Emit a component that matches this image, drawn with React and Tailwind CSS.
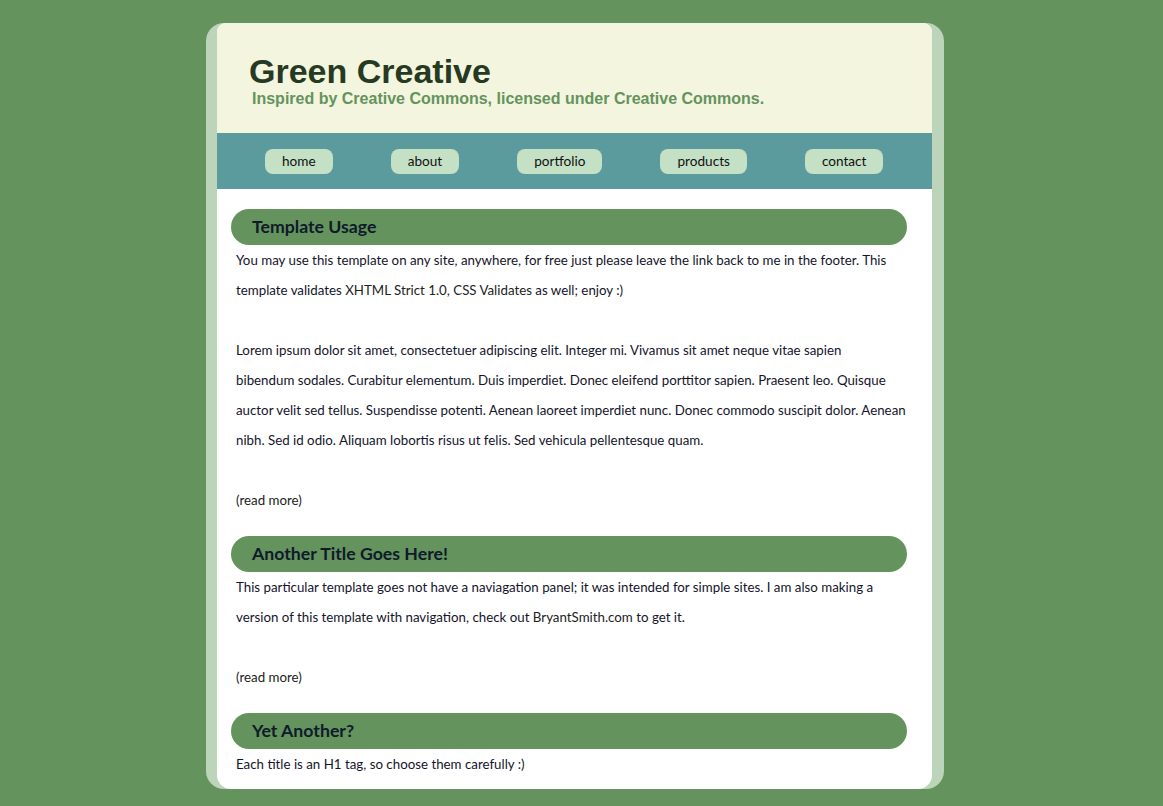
import React from 'react';

const navItems = ['home', 'about', 'portfolio', 'products', 'contact'];

const PostTitle = ({ children }) => (
  <h1 className="h-[36px] w-[676px] rounded-full bg-[#64935d] pl-[21px] text-[17.7px] font-bold leading-[36px] text-[#0f1a2b]">
    {children}
  </h1>
);

const App = () => {
  return (
    <div className="min-h-[806px] bg-[#64935d] pt-[23px] pr-[13px] font-['Lato',sans-serif]">
      {/* outer frame with the light side strips */}
      <div className="mx-auto w-[738px] rounded-[18px] bg-[#bcd4b9] pl-[11px] pr-[12px]">
        <div className="overflow-hidden rounded-t-[9px] rounded-b-[14px] bg-white">
          {/* header */}
          <div className="h-[110px] bg-[#f3f5de] pl-[32px] pt-[29px] font-['Liberation_Sans',Arial,sans-serif]">
            <div className="text-[34px] font-bold leading-[38px] text-[#263a23]">Green Creative</div>
            <div className="pl-[3px] text-[16px] font-bold leading-[18px] text-[#64935d]">
              Inspired by Creative Commons, licensed under Creative Commons.
            </div>
          </div>

          {/* navigation */}
          <div className="flex h-[56px] items-center gap-[58px] bg-[#5c9b9d] pl-[48px]">
            {navItems.map((item) => (
              <a
                key={item}
                href="#"
                className="h-[25px] rounded-[8px] bg-[#c4e0c5] px-[17px] text-[13.6px] leading-[25px] text-[#111]"
              >
                {item}
              </a>
            ))}
          </div>

          {/* content */}
          <div className="px-[14px] pt-[20px] pb-[10px] text-[13.3px] leading-[30px] text-[#14142b]">
            <div className="mb-[21px]">
              <PostTitle>Template Usage</PostTitle>
              <div className="w-[690px] pl-[5px]">
                <p className="w-[680px]">
                  You may use this template on any site, anywhere, for free just please leave the link back to me in the footer. This template validates{' '}
                  <a href="#" className="text-[#222]">XHTML Strict 1.0</a>,{' '}
                  <a href="#" className="text-[#222]">CSS Validates</a> as well; enjoy :)
                </p>
                <br />
                <p>
                  Lorem ipsum dolor sit amet, consectetuer adipiscing elit. Integer mi. Vivamus sit amet neque vitae sapien<br />
                  bibendum sodales. Curabitur elementum. Duis imperdiet. Donec eleifend porttitor sapien. Praesent leo. Quisque<br />
                  auctor velit sed tellus. Suspendisse potenti. Aenean laoreet imperdiet nunc. Donec commodo suscipit dolor. Aenean<br />
                  nibh. Sed id odio. Aliquam lobortis risus ut felis. Sed vehicula pellentesque quam.
                </p>
                <br />
                <a href="#" className="text-[#222]">(read more)</a>
              </div>
            </div>

            <div className="mb-[21px]">
              <PostTitle>Another Title Goes Here!</PostTitle>
              <div className="w-[680px] pl-[5px]">
                <p>
                  This particular template goes not have a naviagation panel; it was intended for simple sites. I am also making a version of this template with navigation, check out{' '}
                  <a href="#" className="text-[#222]">BryantSmith.com</a> to get it.
                </p>
                <br />
                <a href="#" className="text-[#222]">(read more)</a>
              </div>
            </div>

            <div>
              <PostTitle>Yet Another?</PostTitle>
              <div className="w-[680px] pl-[5px]">
                <p>Each title is an H1 tag, so choose them carefully :)</p>
              </div>
            </div>
          </div>
        </div>
      </div>
    </div>
  );
};

export default App;
